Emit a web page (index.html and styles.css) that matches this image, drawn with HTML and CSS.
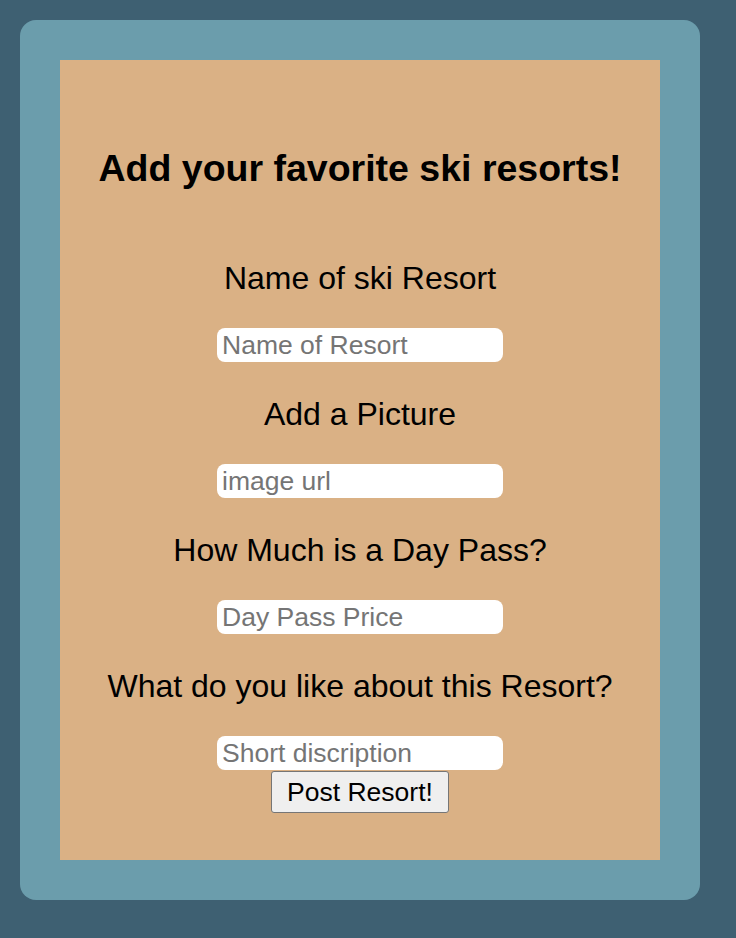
FILE: index.html
```html
<!DOCTYPE html>
<html lang="en">
<head>
<meta charset="utf-8">
<title>Ski Resorts</title>
<link rel="stylesheet" href="styles.css">
</head>
<body>
<div class="card">
  <form class="panel">
    <h1 class="title">Add your favorite ski resorts!</h1>
    <label class="label first" for="name">Name of ski Resort</label>
    <input class="field" id="name" type="text" placeholder="Name of Resort">
    <label class="label" for="img">Add a Picture</label>
    <input class="field" id="img" type="text" placeholder="image url">
    <label class="label" for="price">How Much is a Day Pass?</label>
    <input class="field" id="price" type="text" placeholder="Day Pass Price">
    <label class="label" for="desc">What do you like about this Resort?</label>
    <input class="field" id="desc" type="text" placeholder="Short discription">
    <button class="submit" type="button">Post Resort!</button>
  </form>
</div>
</body>
</html>
```
FILE: styles.css
```css
html, body {
  margin: 0;
  padding: 0;
}
body {
  background: #3e6072;
  font-family: "Liberation Sans", Arial, Helvetica, sans-serif;
  color: #000;
  padding: 20px;
  min-height: 938px;
  box-sizing: border-box;
}
.card {
  width: 680px;
  height: 880px;
  box-sizing: border-box;
  padding: 40px;
  background: #6b9dac;
  border-radius: 16px;
}
.panel {
  height: 800px;
  background: #dab185;
  display: flex;
  flex-direction: column;
  align-items: center;
  margin: 0;
}
.title {
  margin: 86px 0 0;
  font-size: 37.5px;
  line-height: 44px;
  font-weight: bold;
}
.label {
  display: block;
  font-size: 32px;
  line-height: 36px;
  margin-top: 34px;
  margin-bottom: 32px;
}
.label.first {
  margin-top: 70px;
}
.field {
  width: 286px;
  height: 34px;
  box-sizing: border-box;
  border: none;
  border-radius: 8px;
  background: #fff;
  padding: 0 5px;
  font-family: "Liberation Sans", Arial, Helvetica, sans-serif;
  font-size: 26.5px;
  color: #000;
  outline: none;
}
.field::placeholder {
  color: #757575;
}
.submit {
  margin-top: 1px;
  width: 178px;
  height: 42px;
  box-sizing: border-box;
  background: #efefef;
  border: 1px solid #767676;
  border-radius: 3px;
  font-family: "Liberation Sans", Arial, Helvetica, sans-serif;
  font-size: 26.5px;
  color: #000;
  padding: 0;
}
```
